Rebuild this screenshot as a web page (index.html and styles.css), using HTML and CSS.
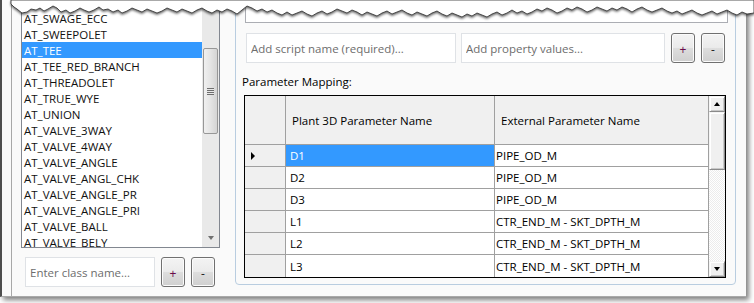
FILE: index.html
```html
<!DOCTYPE html>
<html>
<head>
<meta charset="utf-8">
<link rel="stylesheet" href="styles.css">
</head>
<body>
<div class="shot">
  <div class="gutter"></div>
  <div class="leftcol">
    <div class="listbox">
      <ul class="items">
        <li>AT_SWAGE_ECC</li>
        <li>AT_SWEEPOLET</li>
        <li class="sel">AT_TEE</li>
        <li>AT_TEE_RED_BRANCH</li>
        <li>AT_THREADOLET</li>
        <li>AT_TRUE_WYE</li>
        <li>AT_UNION</li>
        <li>AT_VALVE_3WAY</li>
        <li>AT_VALVE_4WAY</li>
        <li>AT_VALVE_ANGLE</li>
        <li>AT_VALVE_ANGL_CHK</li>
        <li>AT_VALVE_ANGLE_PR</li>
        <li>AT_VALVE_ANGLE_PRI</li>
        <li>AT_VALVE_BALL</li>
        <li>AT_VALVE_BELY</li>
      </ul>
      <div class="vscroll">
        <div class="thumb"><span class="grip"></span></div>
        <div class="sb-fill"></div>
        <div class="sb-down"><span class="tri-down-gray"></span></div>
      </div>
    </div>
    <div class="addrow">
      <input class="tbox w-class" placeholder="Enter class name...">
      <button class="btn plus">+</button>
      <button class="btn minus">-</button>
    </div>
  </div>
  <div class="group">
    <div class="topbox"></div>
    <div class="addrow2">
      <input class="tbox w-script" placeholder="Add script name (required)...">
      <input class="tbox w-prop" placeholder="Add property values...">
      <button class="btn plus">+</button>
      <button class="btn minus">-</button>
    </div>
    <div class="label">Parameter Mapping:</div>
    <div class="grid">
      <div class="table">
        <div class="hcell corner"></div>
        <div class="hcell h1">Plant 3D Parameter Name</div>
        <div class="hcell h2">External Parameter Name</div>

        <div class="rhead"><span class="tri-right"></span></div>
        <div class="cell c1 selcell">D1</div>
        <div class="cell c2">PIPE_OD_M</div>

        <div class="rhead"></div>
        <div class="cell c1">D2</div>
        <div class="cell c2">PIPE_OD_M</div>

        <div class="rhead"></div>
        <div class="cell c1">D3</div>
        <div class="cell c2">PIPE_OD_M</div>

        <div class="rhead"></div>
        <div class="cell c1">L1</div>
        <div class="cell c2">CTR_END_M - SKT_DPTH_M</div>

        <div class="rhead"></div>
        <div class="cell c1">L2</div>
        <div class="cell c2">CTR_END_M - SKT_DPTH_M</div>

        <div class="rhead last"></div>
        <div class="cell c1 last">L3</div>
        <div class="cell c2 last">CTR_END_M - SKT_DPTH_M</div>
      </div>
      <div class="gscroll">
        <div class="gbtn"><span class="tri-up"></span></div>
        <div class="gthumb"></div>
        <div class="gtrack"></div>
        <div class="gbtn"><span class="tri-down"></span></div>
      </div>
    </div>
  </div>
</div>
<svg class="tear" width="754" height="30" viewBox="0 0 754 30">
  <defs>
    <filter id="tsh" x="-5%" y="-50%" width="110%" height="200%">
      <feDropShadow dx="0" dy="1.5" stdDeviation="1.3" flood-color="#000" flood-opacity="0.6"/>
    </filter>
  </defs>
  <path filter="url(#tsh)" fill="#fff" stroke="#2a2a2a" stroke-width="0.8" d="M11,0 L11,4 L14,7 L17,9 L22,13 L27,12 L31,9 L36,10 L40,8 L44,11 L48,9 L53,6 L57,8 L61,12 L66,10 L70,13 L75,11 L80,8 L84,10 L89,12 L94,10 L99,7 L103,10 L108,9 L113,12 L118,10 L122,13 L127,11 L132,8 L137,10 L142,12 L147,9 L152,11 L157,13 L162,11 L167,8 L172,10 L177,12 L182,9 L187,11 L192,13 L197,10 L202,8 L207,11 L212,13 L217,10 L222,12 L227,9 L232,11 L237,14 L242,10 L247,6 L252,8 L257,11 L262,9 L267,12 L272,10 L277,13 L282,15 L287,12 L292,15 L297,13 L302,11 L307,14 L312,16 L317,13 L322,11 L327,14 L332,12 L337,9 L342,11 L347,13 L352,10 L357,12 L362,15 L367,12 L372,14 L377,16 L382,13 L387,11 L392,14 L397,12 L402,10 L407,13 L412,15 L417,12 L422,14 L427,16 L432,13 L437,11 L442,14 L447,16 L452,13 L457,15 L462,17 L467,14 L472,16 L477,13 L482,15 L487,17 L492,14 L497,12 L502,15 L507,13 L512,10 L517,13 L522,11 L527,14 L532,12 L537,9 L542,11 L547,8 L552,10 L557,13 L562,11 L567,8 L572,10 L577,7 L582,9 L587,12 L592,10 L597,7 L602,9 L607,11 L612,8 L617,10 L622,7 L627,9 L632,12 L637,9 L642,7 L647,10 L652,12 L657,10 L662,8 L667,11 L672,13 L677,11 L682,14 L687,12 L692,10 L697,13 L702,15 L707,13 L712,11 L717,14 L722,12 L727,10 L732,13 L737,15 L742,12 L747,14 L754,13 L754,0 Z"/>
</svg>
</body>
</html>
```

FILE: styles.css
```css
html, body {
  margin: 0;
  padding: 0;
  background: #fff;
}
body {
  font-family: "Open Sans", "Noto Sans", sans-serif;
  font-size: 11.5px;
  color: #000;
  width: 754px;
  height: 303px;
  position: relative;
  overflow: hidden;
}

.shot {
  width: 746px;
  height: 297px;
  box-sizing: border-box;
  background: #fafafa;
  border-left: 2px solid #4e4e4e;
  border-bottom: 1px solid #a9a9a9;
  display: flex;
  align-items: flex-start;
  overflow: hidden;
  box-shadow: 3px 3px 5px rgba(0, 0, 0, 0.5);
}

.gutter {
  width: 1px;
  height: 100%;
  background: #a8a8a8;
  margin-left: 9px;
  flex: none;
}

.leftcol {
  margin-left: 9px;
  width: 199px;
  flex: none;
  display: flex;
  flex-direction: column;
}

.listbox {
  height: 248px;
  box-sizing: border-box;
  border: 1px solid #828790;
  background: #fff;
  display: flex;
}

.items {
  list-style: none;
  margin: 0;
  padding: 9px 0 0;
  width: 180px;
  overflow: hidden;
}
.items li {
  height: 16px;
  line-height: 17px;
  padding-left: 2px;
  white-space: nowrap;
  color: #111;
}
.items li.sel {
  background: #3399ff;
  color: #fff;
}

.vscroll {
  width: 17px;
  background: #e9e9e9;
  display: flex;
  flex-direction: column;
  align-items: center;
}
.thumb {
  margin-top: 47px;
  width: 15px;
  height: 86px;
  box-sizing: border-box;
  border: 1px solid #979797;
  border-radius: 2px;
  background: linear-gradient(to right, #f0f0f0, #e4e4e4 50%, #d4d4d4);
  display: flex;
  align-items: center;
  justify-content: center;
}
.grip {
  width: 7px;
  height: 7px;
  background: repeating-linear-gradient(to bottom, #6e6e6e 0 1px, #e8e8e8 1px 2px);
}
.sb-fill { flex: 1; }
.sb-down {
  height: 17px;
  display: flex;
  align-items: center;
  justify-content: center;
  margin-bottom: 1px;
}
.tri-down-gray {
  width: 0;
  height: 0;
  border-left: 3.5px solid transparent;
  border-right: 3.5px solid transparent;
  border-top: 4px solid #707070;
}

.addrow {
  display: flex;
  margin-top: 9px;
  padding-left: 4px;
  height: 30px;
}

.tbox {
  box-sizing: border-box;
  height: 30px;
  border: 1px solid #dfe2e6;
  background: #fff;
  padding: 0 0 0 4px;
  font-family: inherit;
  font-size: 11.5px;
  outline: none;
  margin: 0;
}
.tbox::placeholder {
  color: #6d6d6d;
}
.w-class { width: 130px; }
.w-script { width: 210px; }
.w-prop { width: 204px; margin-left: 5px; }

.btn {
  box-sizing: border-box;
  width: 24px;
  height: 30px;
  margin: 0 0 0 6px;
  padding: 3px 0 0;
  border: 1px solid #707070;
  border-radius: 3px;
  background: linear-gradient(to bottom, #f3f3f3 0%, #ebebeb 48%, #dddddd 52%, #cfcfcf 100%);
  box-shadow: inset 0 0 0 1px #fbfbfb;
  font-family: inherit;
  font-size: 12px;
  font-weight: normal;
  line-height: 1;
}
.btn.plus { color: #6a0a4a; }
.btn.minus { color: #222; }

.group {
  margin-left: 15px;
  margin-top: -12px;
  width: 501px;
  height: 297px;
  flex: none;
  box-sizing: border-box;
  border: 1px solid #b9cde0;
  border-radius: 4px;
  display: flex;
  flex-direction: column;
}

.topbox {
  margin: 2px 0 0 9px;
  width: 483px;
  height: 32px;
  box-sizing: border-box;
  border: 1px solid #abadb3;
  background: #fff;
}

.addrow2 {
  display: flex;
  margin: 10px 0 0 10px;
  height: 30px;
}

.label {
  margin: 11px 0 0 6px;
  line-height: 16px;
  height: 16px;
}

.grid {
  margin: 5px 0 0 8px;
  width: 482px;
  height: 183px;
  box-sizing: border-box;
  border: 1px solid #000;
  display: flex;
  background: #fff;
}

.table {
  display: grid;
  grid-template-columns: 41px 209px 214px;
  grid-template-rows: 49px repeat(6, 22px);
}

.hcell {
  background: #f0f0f0;
  border-right: 1px solid #a0a0a0;
  border-bottom: 1px solid #a0a0a0;
  box-sizing: border-box;
  display: flex;
  align-items: center;
  white-space: nowrap;
}
.h1 { padding-left: 6px; }
.h2 { padding-left: 6px; }

.rhead {
  background: #f0f0f0;
  border-right: 1px solid #a0a0a0;
  border-bottom: 1px solid #a0a0a0;
  box-sizing: border-box;
  display: flex;
  align-items: center;
  padding-left: 6px;
}
.tri-right {
  width: 0;
  height: 0;
  border-top: 4px solid transparent;
  border-bottom: 4px solid transparent;
  border-left: 4px solid #000;
}

.cell {
  border-right: 1px solid #a0a0a0;
  border-bottom: 1px solid #a0a0a0;
  box-sizing: border-box;
  display: flex;
  align-items: center;
  white-space: nowrap;
  background: #fff;
}
.c1 { padding-left: 4px; }
.c2 { padding-left: 1px; }
.selcell {
  background: #3399ff;
  color: #fff;
}
.last { border-bottom: none; }

.gscroll {
  width: 16px;
  display: flex;
  flex-direction: column;
  background-color: #fff;
  background-image: conic-gradient(#ececec 0 25%, #fff 0 50%, #ececec 0 75%, #fff 0);
  background-size: 2px 2px;
}
.gbtn {
  height: 16px;
  box-sizing: border-box;
  background: #f0f0f0;
  border: 1px solid;
  border-color: #f4f4f4 #8a8a8a #8a8a8a #f4f4f4;
  box-shadow: inset 1px 1px 0 #fff, inset -1px -1px 0 #c8c8c8;
  display: flex;
  align-items: center;
  justify-content: center;
}
.gthumb {
  height: 58px;
  box-sizing: border-box;
  background: #f0f0f0;
  border: 1px solid;
  border-color: #f4f4f4 #8a8a8a #8a8a8a #f4f4f4;
  box-shadow: inset 1px 1px 0 #fff, inset -1px -1px 0 #c8c8c8;
}
.gtrack { flex: 1; }
.tri-up {
  width: 0;
  height: 0;
  border-left: 3.5px solid transparent;
  border-right: 3.5px solid transparent;
  border-bottom: 4px solid #000;
}
.tri-down {
  width: 0;
  height: 0;
  border-left: 3.5px solid transparent;
  border-right: 3.5px solid transparent;
  border-top: 4px solid #000;
}

.tear {
  position: absolute;
  left: 0;
  top: 0;
}
```
